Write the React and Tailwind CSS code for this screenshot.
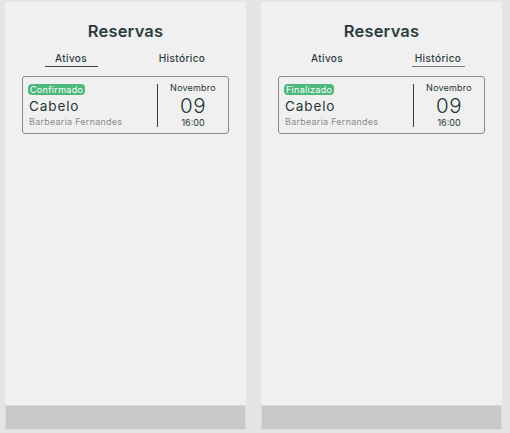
import React, { useState } from 'react';

const reservas = [
    { id: 1, servico: 'Cabelo', local: 'Barbearia Fernandes', mes: 'Novembro', dia: '09', hora: '16:00' },
];

const ReservaCard = ({ reserva, status }) => (
    <div className="mx-[17px] mt-[9px] h-[58px] border border-[#8a8a8a] rounded-[3px] flex items-center">
        <div className="flex-1 pl-[5px] flex flex-col items-start">
            <span className="bg-[#4bb97a] text-white text-[9px] leading-[11px] px-[2px] rounded-[4px] tracking-[0.3px]">
                {status}
            </span>
            <span className="text-[13.5px] leading-[16px] mt-[3px] ml-[1px] text-[#263636] tracking-[0.9px]">{reserva.servico}</span>
            <span className="text-[9px] leading-[11px] mt-[2px] ml-[1px] text-[#8a8a8a] tracking-[0.25px]">{reserva.local}</span>
        </div>
        <div className="w-px h-[43px] bg-[#3a3a3a]" />
        <div className="w-[70px] flex flex-col items-center text-[#263636]">
            <span className="text-[9px] leading-[12px] tracking-[0.2px]">{reserva.mes}</span>
            <span className="text-[20.5px] leading-[23px] font-light tracking-[0.5px]">{reserva.dia}</span>
            <span className="text-[9px] leading-[11px]">{reserva.hora}</span>
        </div>
    </div>
);

const Painel = ({ abaInicial }) => {
    const [aba, setAba] = useState(abaInicial);
    const status = aba === 'ativos' ? 'Confirmado' : 'Finalizado';

    return (
        <div className="w-[241px] h-[428px] bg-[#f0f0f0] flex flex-col">
            <h1 className="text-center text-[16.5px] font-semibold text-[#2d3d3d] mt-[18px] leading-[22px] tracking-[0.2px]">Reservas</h1>
            <div className="flex justify-center gap-[58px] mt-[10px] ml-[2px]">
                <button
                    onClick={() => setAba('ativos')}
                    className={`w-[53px] pb-[1px] text-[10px] leading-[13px] font-medium text-[#2d3d3d] tracking-[0.4px] border-b-[1.5px] ${aba === 'ativos' ? 'border-[#3a4545]' : 'border-transparent'}`}
                >
                    Ativos
                </button>
                <button
                    onClick={() => setAba('historico')}
                    className={`w-[53px] pb-[1px] text-[10px] leading-[13px] font-medium text-[#2d3d3d] tracking-[0.4px] border-b-[1.5px] ${aba === 'historico' ? 'border-[#7a7a7a]' : 'border-transparent'}`}
                >
                    Histórico
                </button>
            </div>
            {reservas.map((r) => (
                <ReservaCard key={r.id} reserva={r} status={status} />
            ))}
            <div className="flex-1" />
            <div className="h-[25px] bg-[#c8c8c8] border border-[#dcdcdc]" />
        </div>
    );
};

export default function App() {
    return (
        <div className="w-[510px] h-[433px] bg-[#e5e5e5] pt-[2px] pl-[5px] flex gap-[15px]" style={{ fontFamily: 'Inter, "Noto Sans", sans-serif' }}>
            <Painel abaInicial="ativos" />
            <Painel abaInicial="historico" />
        </div>
    );
}
